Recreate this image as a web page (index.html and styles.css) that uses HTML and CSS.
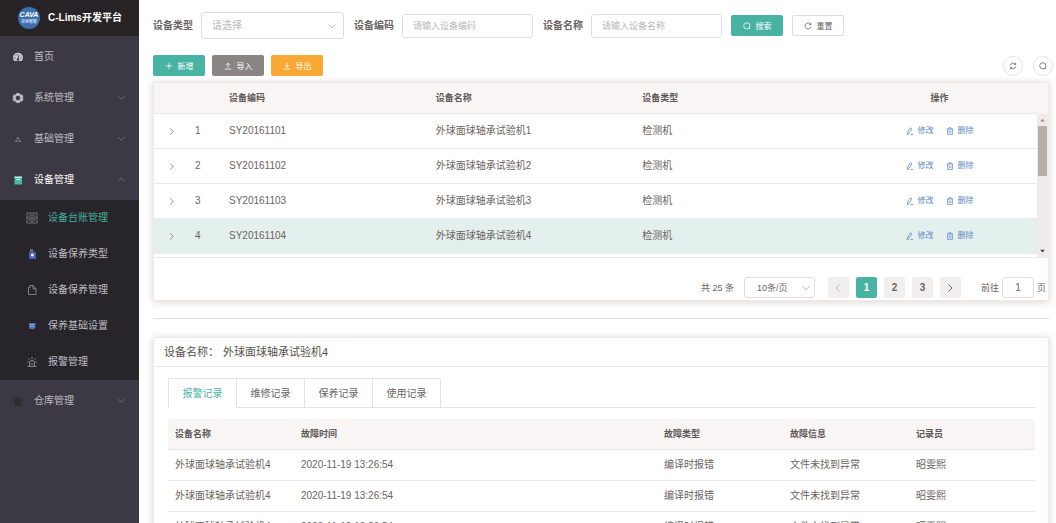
FILE: index.html
```html
<!DOCTYPE html>
<html lang="zh-CN">
<head>
    <meta charset="UTF-8">
    <meta name="viewport" content="width=device-width, initial-scale=1.0">
    <title>C-Lims开发平台</title>
    <link rel="stylesheet" href="styles.css">
</head>
<body>
    <svg class="sprite" aria-hidden="true">
        <symbol id="down" viewBox="0 0 10 10"><path d="M1.5 3.5 5 7l3.5-3.5"/></symbol>
        <symbol id="up" viewBox="0 0 10 10"><path d="M1.5 7 5 3.5 8.5 7"/></symbol>
        <symbol id="right" viewBox="0 0 10 10"><path d="M3.5 1.5 7 5 3.5 8.5"/></symbol>
        <symbol id="left" viewBox="0 0 10 10"><path d="M6.5 1.5 3 5l3.5 3.5"/></symbol>
        <symbol id="search" viewBox="0 0 10 10"><circle cx="4.8" cy="4.8" r="3.9"/><path d="M7.2 7.5 8.8 9"/></symbol>
        <symbol id="edit" viewBox="0 0 10 10"><path d="M2 6.3 5.4 1.2Q7.4 1 7 3L4 7.6 1.8 8.4zM1 9.3h2M5.500 9.300h3.500"/></symbol>
        <symbol id="trash" viewBox="0 0 10 10"><path d="M1 2.5h8M3.5 2.4V1h3v1.4M2 2.6v6.6h6V2.6M4 4.4v3M6 4.4v3"/></symbol>
    </svg>

    <div class="layout">
        <aside class="sidebar">
            <div class="brand">
                <svg class="logo" viewBox="0 0 22 22">
                    <circle cx="11" cy="11" r="11" fill="#3b6fad"/>
                    <text class="logo-name" x="11" y="10" text-anchor="middle">CAVA</text>
                    <text class="logo-sub" x="11" y="16" text-anchor="middle">开远智能</text>
                </svg>
                <span>C-Lims开发平台</span>
            </div>
            <nav class="menu">
                <a href="#" class="menu-item">
                    <svg class="menu-icon" viewBox="0 0 12 12"><path d="M2.2 10A5 5 0 1 1 9.8 10z" fill="#c9c7cd"/><path d="M6 8.5 7 4M2.3 7h1.200M8.500 7h1.200M3.500 4l.8.8M5.500 3v1" stroke="#3e3a45" stroke-width=".8"/><circle cx="6" cy="8.500" r="1.200" fill="#3e3a45"/></svg>
                    <span>首页</span>
                </a>
                <a href="#" class="menu-item">
                    <svg class="menu-icon" viewBox="0 0 12 12"><path d="M4.5 1h3L8.200 2.600l2-.1L11.500 5 10.500 6l1 1-1.300 2.500-2-.1L7.500 11h-3L3.800 9.400l-2 .1L.5 7l1-1-1-1 1.300-2.500 2 .1z" fill="#bab8ba"/><circle cx="6" cy="6" r="2.200" fill="#3e3a45"/></svg>
                    <span>系统管理</span>
                    <svg class="arrow"><use href="#down"/></svg>
                </a>
                <a href="#" class="menu-item">
                    <svg class="menu-icon" viewBox="0 0 12 12"><path d="M6 4 4.8 6h2.4zM4.3 7 3.3 8.5h2zM7.7 7l-1 1.5h2z" fill="none" stroke="#9b98a0" stroke-width=".6"/></svg>
                    <span>基础管理</span>
                    <svg class="arrow"><use href="#down"/></svg>
                </a>
                <a href="#" class="menu-item open">
                    <svg class="menu-icon" viewBox="0 0 12 12"><path d="M2.500 2h7.500v8.500H2.500z" fill="#4fb5a9"/><path d="M2.500 3.500H10M4.500 5.500h3.500" stroke="#d5efeb"/></svg>
                    <span>设备管理</span>
                    <svg class="arrow"><use href="#up"/></svg>
                </a>
                <div class="submenu">
                    <a href="#" class="submenu-item active">
                        <svg class="menu-icon" viewBox="0 0 12 12"><path d="M1 1h10v10H1z" fill="none" stroke="#8d8a90" stroke-width=".8"/><circle cx="6" cy="6" r="3.3" fill="none" stroke="#8d8a90" stroke-width=".8"/><circle cx="6" cy="6" r="1.2" fill="none" stroke="#8d8a90" stroke-width=".8"/></svg>
                        <span>设备台账管理</span>
                    </a>
                    <a href="#" class="submenu-item">
                        <svg class="menu-icon" viewBox="0 0 12 12"><path d="M4 1h3v3H4z" fill="#a8525e"/><path d="M4 3h4l2 2v6H3V5z" fill="#4a5fb4"/><circle cx="6.4" cy="7" r="1.5" fill="#eef2ff"/></svg>
                        <span>设备保养类型</span>
                    </a>
                    <a href="#" class="submenu-item">
                        <svg class="menu-icon" viewBox="0 0 12 12"><path d="M2.5 3.5h1.500v-2h3L10 4.500v6H2.500zM7 1.500v3.300h3" fill="none" stroke="#9a979c" stroke-width=".8"/></svg>
                        <span>设备保养管理</span>
                    </a>
                    <a href="#" class="submenu-item">
                        <svg class="menu-icon" viewBox="0 0 12 12"><path d="M3 3h6.500v4.500l-2 2L3 8.500z" fill="#4c73b8"/><path d="M4 4.700h4.500M4 6.500h4" stroke="#a9bcdf" stroke-width=".6"/></svg>
                        <span>保养基础设置</span>
                    </a>
                    <a href="#" class="submenu-item">
                        <svg class="menu-icon" viewBox="0 0 12 12"><path d="M3.5 9.800V7a2.500 2.500 0 0 1 5 0v2.800M1.500 10.300h9M6 1v2M1 6h1.300M9.700 6H11M2.300 2.500l1.300 1.300M9.700 2.500 8.400 3.800M6 7v2" fill="none" stroke="#b5b2b7" stroke-width=".8"/></svg>
                        <span>报警管理</span>
                    </a>
                </div>
                <a href="#" class="menu-item">
                    <svg class="menu-icon" viewBox="0 0 12 12"><path d="M6 1 1 5.500h1.500V11h7V5.500H11z" fill="#2f2d2e"/></svg>
                    <span>仓库管理</span>
                    <svg class="arrow"><use href="#down"/></svg>
                </a>
            </nav>
        </aside>

        <main class="content">
            <form class="filters">
                <div class="field">
                    <label for="deviceType">设备类型</label>
                    <div class="select-wrap">
                        <select id="deviceType" class="type-select"><option>请选择</option></select>
                        <svg class="select-arrow"><use href="#down"/></svg>
                    </div>
                </div>
                <div class="field">
                    <label for="deviceCode">设备编码</label>
                    <input type="text" id="deviceCode" placeholder="请输入设备编码">
                </div>
                <div class="field">
                    <label for="deviceName">设备名称</label>
                    <input type="text" id="deviceName" placeholder="请输入设备名称">
                </div>
                <button type="button" class="btn btn-primary"><svg><use href="#search"/></svg>搜索</button>
                <button type="reset" class="btn btn-plain"><svg viewBox="0 0 10 10"><path d="M8.300 3A3.800 3.800 0 1 0 8.800 5.500M8.500 1v2.300H6.200"/></svg>重置</button>
            </form>

            <div class="toolbar">
                <button type="button" class="btn btn-primary"><svg viewBox="0 0 10 10"><path d="M5 1v8M1 5h8"/></svg>新增</button>
                <button type="button" class="btn btn-info"><svg viewBox="0 0 10 10"><path d="M5 7V1.500M2.500 4 5 1.500 7.500 4M1 8.800h8"/></svg>导入</button>
                <button type="button" class="btn btn-warning"><svg viewBox="0 0 10 10"><path d="M5 1v5.500M2.500 4 5 6.500 7.500 4M1 8.800h8"/></svg>导出</button>
                <div class="tools">
                    <button type="button" class="circle" aria-label="刷新"><svg viewBox="0 0 10 10"><path d="M1.500 4.500A3.600 3.600 0 0 1 8 3M8.300 1v2.200H6.200M8.500 5.500A3.600 3.600 0 0 1 2 7M1.700 9V6.800h2.100"/></svg></button>
                    <button type="button" class="circle" aria-label="搜索"><svg><use href="#search"/></svg></button>
                </div>
            </div>

            <section class="card">
                <div class="device-head">
                    <table class="table device-table">
                        <colgroup><col class="col-mark"><col class="col-mark"><col><col><col><col class="col-action"></colgroup>
                        <thead>
                            <tr><th></th><th></th><th>设备编码</th><th>设备名称</th><th>设备类型</th><th class="action">操作</th></tr>
                        </thead>
                    </table>
                </div>
                <div class="device-body">
                    <table class="table device-table">
                        <colgroup><col class="col-mark"><col class="col-mark"><col><col><col><col class="col-action"></colgroup>
                        <tbody>
                            <tr>
                                <td class="expand"><svg><use href="#right"/></svg></td><td>1</td><td>SY20161101</td><td>外球面球轴承试验机1</td><td>检测机</td>
                                <td class="action"><a href="#"><svg><use href="#edit"/></svg>修改</a><a href="#"><svg><use href="#trash"/></svg>删除</a></td>
                            </tr>
                            <tr>
                                <td class="expand"><svg><use href="#right"/></svg></td><td>2</td><td>SY20161102</td><td>外球面球轴承试验机2</td><td>检测机</td>
                                <td class="action"><a href="#"><svg><use href="#edit"/></svg>修改</a><a href="#"><svg><use href="#trash"/></svg>删除</a></td>
                            </tr>
                            <tr>
                                <td class="expand"><svg><use href="#right"/></svg></td><td>3</td><td>SY20161103</td><td>外球面球轴承试验机3</td><td>检测机</td>
                                <td class="action"><a href="#"><svg><use href="#edit"/></svg>修改</a><a href="#"><svg><use href="#trash"/></svg>删除</a></td>
                            </tr>
                            <tr class="current">
                                <td class="expand"><svg><use href="#right"/></svg></td><td>4</td><td>SY20161104</td><td>外球面球轴承试验机4</td><td>检测机</td>
                                <td class="action"><a href="#"><svg><use href="#edit"/></svg>修改</a><a href="#"><svg><use href="#trash"/></svg>删除</a></td>
                            </tr>
                        </tbody>
                    </table>
                    <div class="scrollbar">
                        <svg viewBox="0 0 12 12"><path d="M3.5 7.500 6 5l2.500 2.500z" fill="#8d8583"/></svg>
                        <div class="thumb"></div>
                        <svg viewBox="0 0 12 12"><path d="M3.5 4.500 6 7.500l2.500-3z" fill="#3f3a39"/></svg>
                    </div>
                </div>
                <div class="pagination">
                    <span>共 25 条</span>
                    <div class="select-wrap page-size">
                        <select aria-label="每页条数"><option>10条/页</option></select>
                        <svg class="select-arrow"><use href="#down"/></svg>
                    </div>
                    <div class="pager">
                        <button type="button" aria-label="上一页" disabled><svg><use href="#left"/></svg></button>
                        <button type="button" class="active">1</button>
                        <button type="button">2</button>
                        <button type="button">3</button>
                        <button type="button" aria-label="下一页"><svg><use href="#right"/></svg></button>
                    </div>
                    <div class="jump">
                        <label for="jumpPage">前往</label>
                        <input type="text" id="jumpPage" value="1">
                        <span>页</span>
                    </div>
                </div>
            </section>

            <hr class="divider">

            <section class="card">
                <h2 class="card-title"><span>设备名称：</span><span>外球面球轴承试验机4</span></h2>
                <div class="records">
                    <div class="tabs" role="tablist">
                        <button type="button" role="tab" class="tab active">报警记录</button>
                        <button type="button" role="tab" class="tab">维修记录</button>
                        <button type="button" role="tab" class="tab">保养记录</button>
                        <button type="button" role="tab" class="tab">使用记录</button>
                    </div>
                    <table class="table record-table">
                        <colgroup><col class="col-record"><col><col class="col-record"><col class="col-record"><col class="col-record"></colgroup>
                        <thead>
                            <tr><th>设备名称</th><th>故障时间</th><th>故障类型</th><th>故障信息</th><th>记录员</th></tr>
                        </thead>
                        <tbody>
                            <tr><td>外球面球轴承试验机4</td><td>2020-11-19 13:26:54</td><td>编译时报错</td><td>文件未找到异常</td><td>昭雯熙</td></tr>
                            <tr><td>外球面球轴承试验机4</td><td>2020-11-19 13:26:54</td><td>编译时报错</td><td>文件未找到异常</td><td>昭雯熙</td></tr>
                            <tr><td>外球面球轴承试验机4</td><td>2020-11-19 13:26:54</td><td>编译时报错</td><td>文件未找到异常</td><td>昭雯熙</td></tr>
                        </tbody>
                    </table>
                </div>
            </section>
        </main>
    </div>
</body>
</html>
```

FILE: styles.css
```css
* {
    box-sizing: border-box;
}

body {
    margin: 0;
    background: #fff;
    color: #6b6462;
    font-family: "Liberation Sans", "Noto Sans CJK SC", sans-serif;
    font-size: 10px;
    line-height: 14px;
}

button,
input,
select {
    font-family: inherit;
    color: inherit;
    margin: 0;
}

a {
    color: inherit;
    text-decoration: none;
}

svg {
    display: block;
    flex: none;
    width: 10px;
    height: 10px;
    fill: none;
    stroke: currentColor;
    stroke-width: 1;
}

.sprite {
    position: absolute;
    width: 0;
    height: 0;
}

.layout {
    display: flex;
    height: 100vh;
    overflow: hidden;
}

/* sidebar */
.sidebar {
    flex: none;
    width: 139px;
    background: #3d3944;
    color: #bfbcc3;
}

.brand {
    display: flex;
    align-items: center;
    gap: 8px;
    height: 36px;
    padding-left: 18px;
    background: #282327;
    color: #fff;
    font-weight: bold;
}

.logo {
    width: 22px;
    height: 22px;
    stroke: none;
}

.logo-name {
    fill: #fff;
    font-size: 7px;
    font-style: italic;
    font-weight: bold;
}

.logo-sub {
    fill: #c9dcf2;
    font-size: 4px;
}

.menu-item,
.submenu-item {
    display: flex;
    align-items: center;
}

.menu-item {
    gap: 10px;
    height: 41px;
    padding: 0 13px 0 12px;
}

.menu-item.open {
    color: #fff;
}

.menu-icon {
    width: 12px;
    height: 12px;
    stroke: none;
}

.arrow {
    width: 9px;
    height: 9px;
    margin-left: auto;
    color: #77737d;
}

.submenu {
    background: #28252a;
}

.submenu-item {
    gap: 10px;
    height: 36px;
    padding-left: 26px;
}

.submenu-item.active {
    color: #43ae9c;
}

/* main area */
.content {
    flex: 1;
    min-width: 0;
    padding: 12px 7px 0 14px;
}

.filters {
    display: flex;
    align-items: center;
    gap: 9px;
}

.field {
    display: flex;
    align-items: center;
    gap: 8px;
}

.field + .field {
    margin-left: 1px;
}

.field label {
    font-weight: bold;
}

input,
select {
    border: 1px solid #dedde3;
    border-radius: 3px;
    background: #fff;
    outline: none;
}

.field input {
    width: 131px;
    height: 24px;
    padding: 0 10px;
    font-size: 9px;
}

input::placeholder {
    color: #b9b6ba;
}

.select-wrap {
    position: relative;
}

select {
    appearance: none;
    width: 100%;
    padding: 0 10px;
}

.field .type-select {
    width: 143px;
    height: 27px;
    color: #b9b6ba;
    font-size: 10px;
}

.select-arrow {
    position: absolute;
    right: 7px;
    top: 50%;
    margin-top: -5px;
    color: #c0bdc2;
    pointer-events: none;
}

.btn {
    display: flex;
    align-items: center;
    justify-content: center;
    gap: 5px;
    width: 52px;
    height: 21px;
    padding: 0;
    border: 1px solid transparent;
    border-radius: 2px;
    color: #fff;
    font-size: 8px;
}

.btn svg {
    width: 8px;
    height: 8px;
}

.btn-primary {
    background: #49b3a3;
}

.btn-info {
    background: #8b8484;
}

.btn-warning {
    background: #f8a933;
}

.btn-plain {
    background: #fff;
    border-color: #dedde3;
    color: #6b6462;
}

.toolbar {
    display: flex;
    align-items: center;
    gap: 7px;
    margin: 16px 0 6px;
}

.tools {
    display: flex;
    gap: 10px;
    margin-left: auto;
    margin-right: -4px;
}

.circle {
    display: flex;
    align-items: center;
    justify-content: center;
    width: 20px;
    height: 20px;
    padding: 0;
    border: 1px solid #e6e2e2;
    border-radius: 50%;
    background: #fff;
}

.circle svg {
    width: 8px;
    height: 8px;
}

.card {
    background: #fff;
    border: 1px solid #eeeaea;
    box-shadow: 0 1px 7px rgba(100, 70, 65, 0.25);
}

/* tables */
.table {
    width: 100%;
    table-layout: fixed;
    border-collapse: separate;
    border-spacing: 0;
}

.table th,
.table td {
    padding: 0 7px;
    text-align: left;
    border-bottom: 1px solid #ebe8ec;
    white-space: nowrap;
}

.table th {
    background: #f8f5f4;
    color: #5f5856;
    font-size: 9px;
    font-weight: bold;
}

.device-head {
    padding-right: 11px;
    background: #f8f5f4;
}

.device-table th {
    height: 31px;
}

.device-table td {
    height: 35px;
}

.device-table .current td {
    background: #e3f0ed;
}

.col-mark {
    width: 34px;
}

.col-action {
    width: 195px;
}

.table .action {
    text-align: center;
}

.expand svg {
    width: 9px;
    height: 9px;
    margin: 0 auto;
    color: #8a8482;
}

.action a {
    display: inline-flex;
    align-items: center;
    gap: 4px;
    color: #638bc4;
    font-size: 8px;
    vertical-align: middle;
}

.action a + a {
    margin-left: 12px;
}

.action svg {
    width: 8px;
    height: 8px;
}

.device-body {
    display: flex;
    align-items: flex-start;
    height: 144px;
    border-bottom: 1px solid #ebe8ec;
}

.device-body .table {
    flex: 1;
    min-width: 0;
}

.scrollbar {
    display: flex;
    flex-direction: column;
    flex: none;
    width: 11px;
    height: 100%;
    background: #efebea;
}

.scrollbar svg {
    width: 11px;
    height: 12px;
    stroke: none;
}

.thumb {
    height: 50px;
    margin: 0 1px auto;
    background: #b8afab;
}

/* pagination */
.pagination {
    display: flex;
    align-items: center;
    justify-content: flex-end;
    padding: 19px 2px 2px 0;
    font-size: 9px;
}

.page-size {
    width: 71px;
    margin: 0 13px 0 10px;
}

.page-size select {
    height: 21px;
    padding: 0 12px;
    font-size: 9px;
}

.page-size .select-arrow {
    right: 4px;
}

.pager {
    display: flex;
    gap: 7px;
}

.pager button {
    display: flex;
    align-items: center;
    justify-content: center;
    width: 21px;
    height: 21px;
    padding: 0;
    border: none;
    border-radius: 2px;
    background: #f1eeee;
    font-size: 10px;
    font-weight: bold;
}

.pager button:disabled {
    color: #b9b3b3;
}

.pager .active {
    background: #49b3a3;
    color: #fff;
}

.jump {
    display: flex;
    align-items: center;
    gap: 3px;
    margin-left: 20px;
}

.jump input {
    width: 32px;
    height: 21px;
    padding: 0;
    font-size: 10px;
    text-align: center;
}

.divider {
    height: 1px;
    margin: 17px 0 18px;
    border: none;
    background: #e3e0e2;
}

/* records */
.card-title {
    display: flex;
    gap: 4px;
    margin: 0;
    padding: 7px 10px;
    border-bottom: 1px solid #ebe8ec;
    color: #57504e;
    font-size: 11px;
    font-weight: normal;
}

.records {
    padding: 11px 13px 11px 14px;
}

.tabs {
    display: flex;
    margin-bottom: 11px;
    border-bottom: 1px solid #e4e1e5;
}

.tab {
    width: 68px;
    height: 30px;
    margin-bottom: -1px;
    padding: 0 0 2px;
    border: 1px solid #e4e1e5;
    border-left: none;
    background: #fff;
    font-size: 10px;
}

.tab:first-child {
    width: 69px;
    border-left: 1px solid #e4e1e5;
}

.tab.active {
    border-bottom-color: #fff;
    color: #49b3a3;
}

.record-table th,
.record-table td {
    height: 31px;
}

.col-record {
    width: 126px;
}
```
